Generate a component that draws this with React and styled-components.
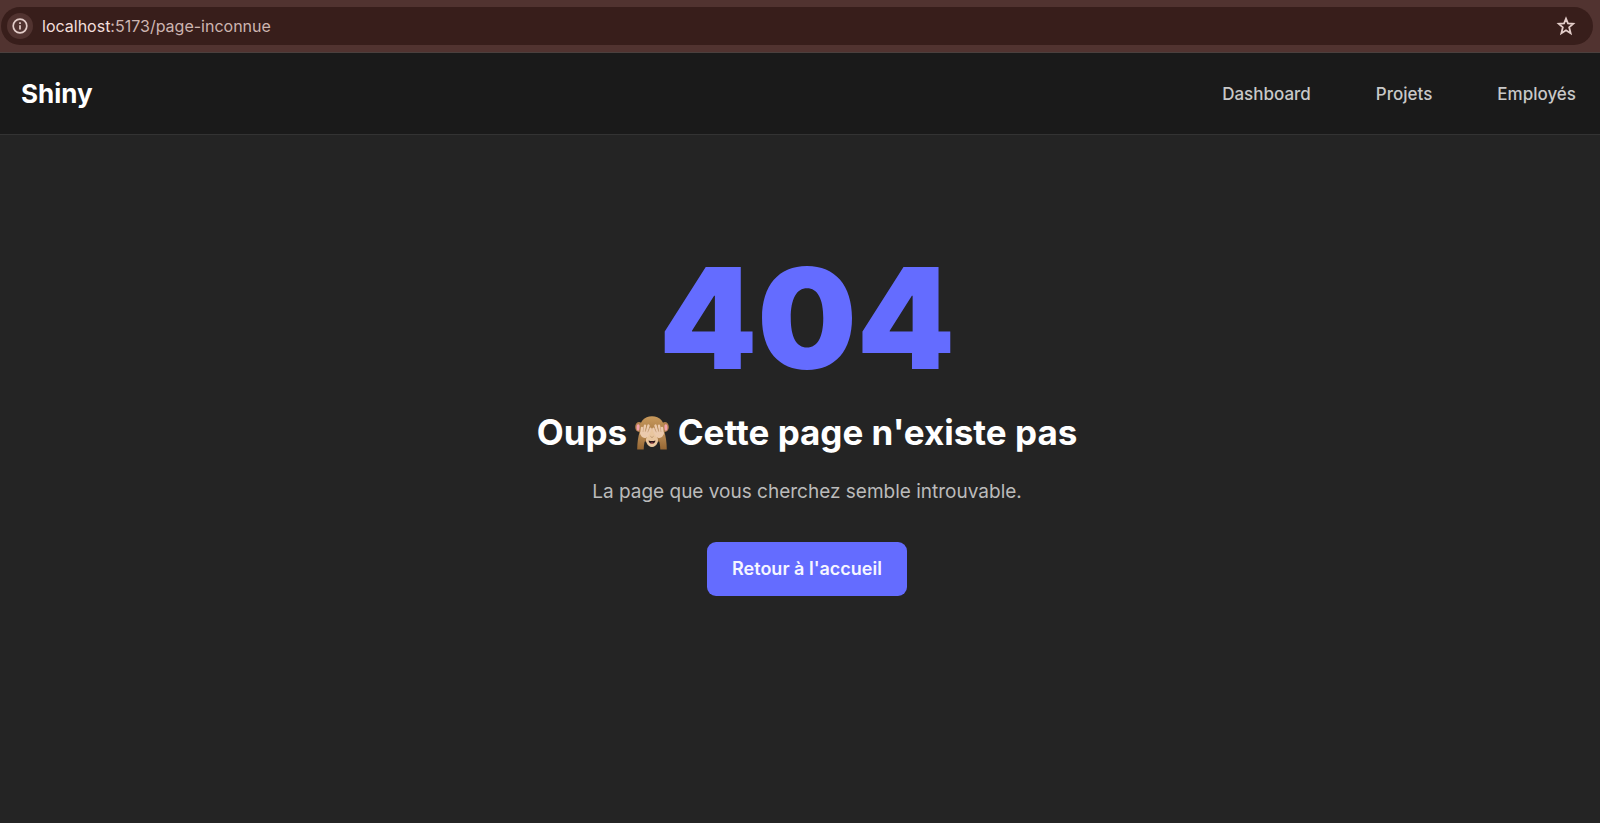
import styled, { createGlobalStyle } from 'styled-components'
import React from 'react'

export default function App() {
  return (
    <>
      <GlobalStyle />
      <Page>
        <AddressBar />
        <Header>
          <Logo href="/">Shiny</Logo>
          <Nav>
            <NavLink href="/dashboard">Dashboard</NavLink>
            <NavLink href="/projets">Projets</NavLink>
            <NavLink href="/employes">Employés</NavLink>
          </Nav>
        </Header>
        <NotFound />
      </Page>
    </>
  )
}

function AddressBar() {
  return (
    <Toolbar>
      <Omnibox>
        <InfoButton type="button" aria-label="Informations sur le site">
          <svg width="16" height="16" viewBox="0 0 16 16" fill="none" stroke="currentColor" strokeWidth="1.7">
            <circle cx="8" cy="8" r="6.8" />
            <path d="M8 7.2v4.3M8 4.2v1.7" />
          </svg>
        </InfoButton>
        <Url>
          <Host>localhost</Host>:5173/page-inconnue
        </Url>
        <StarButton type="button" aria-label="Ajouter aux favoris">
          <svg width="20" height="20" viewBox="0 0 18 18" fill="none" stroke="currentColor" strokeWidth="1.6">
            <path d="M9 2.3l1.750 4.400 4.750.350-3.650 3.050 1.350 5.400L9 12.800l-4.200 2.700 1.350-5.400L2.500 7.050l4.750-.350z" />
          </svg>
        </StarButton>
      </Omnibox>
    </Toolbar>
  )
}

function NotFound() {
  return (
    <Main>
      <Code>404</Code>
      <Title>
        Oups <Monkey /> Cette page n'existe pas
      </Title>
      <Text>La page que vous cherchez semble introuvable.</Text>
      <HomeLink href="/">Retour à l'accueil</HomeLink>
    </Main>
  )
}

function Monkey() {
  return (
    <MonkeySvg viewBox="0 0 34 34" role="img" aria-label="singe">
      <defs>
        <linearGradient id="fur" x1="0" y1="0" x2="0" y2="1">
          <stop offset="0" stopColor="#c99a5c" />
          <stop offset="1" stopColor="#94683a" />
        </linearGradient>
        <linearGradient id="arm" x1="0" y1="0" x2="0" y2="1">
          <stop offset="0" stopColor="#c0935c" />
          <stop offset="1" stopColor="#966632" />
        </linearGradient>
      </defs>
      <ellipse cx="4" cy="11" rx="3.8" ry="5" fill="#b07f4c" />
      <ellipse cx="30" cy="11" rx="3.8" ry="5" fill="#b07f4c" />
      <ellipse cx="3.2" cy="11.5" rx="1.6" ry="3.2" fill="#f3a2ae" />
      <ellipse cx="30.8" cy="11.5" rx="1.6" ry="3.2" fill="#f3a2ae" />
      <path d="M17 .3C9 .3 4.5 6 4.5 13.5c0 7.5 3.5 13.5 12.5 13.5s12.5-6 12.5-13.5C29.5 6 25 .3 17 .3z" fill="url(#fur)" />
      <path d="M17 13c-2 0-3 3-4.700 6-1.500 2.500-1.700 5.500-.8 7.800 1 2.600 3 4.200 5.500 4.200s4.500-1.600 5.500-4.200c.9-2.300.7-5.300-.8-7.800C20 16 19 13 17 13z" fill="#e9c69f" />
      <path d="M15.700 20.500l.8.700M18.300 20.500l-.8.700" stroke="#7d5633" strokeWidth=".8" />
      <path d="M13.600 24.600q3.400 1 6.800 0c0 2-1.400 3.200-3.400 3.200s-3.400-1.200-3.400-3.200z" fill="#2b1519" />
      <path d="M15.200 27q1.800-1.100 3.600 0-1.800 1.200-3.600 0z" fill="#dc6568" />
      <path d="M4.800 15.500C3.200 20 2.300 26 2.200 33.500h6.500c.2-5.500.8-9 3.300-12.500z" fill="url(#arm)" />
      <path d="M29.200 15.500c1.600 4.500 2.500 10.500 2.600 18h-6.500c-.2-5.500-.8-9-3.300-12.500z" fill="url(#arm)" />
      <g id="hand">
        <path
          d="M6.300 17.500L7 12M8.600 17l1.400-7.400M11.200 17l2.300-7.400M13.400 17.500l2.200-4.700"
          fill="none"
          stroke="#ebcaad"
          strokeWidth="2.4"
          strokeLinecap="round"
        />
        <path d="M5.200 16.500c2.500-2 6.500-1.900 9.300 0 0 2.400-1.300 4.300-3.400 5.300-3.300.8-5.700-1.300-5.900-5.300z" fill="#ebcaad" />
        <path d="M8 16l.6-4M10.200 16l1.400-4.700M12.600 16.300l1.700-3.500" fill="none" stroke="#bd946f" strokeWidth=".5" />
      </g>
      <use href="#hand" transform="translate(34 0) scale(-1 1)" />
    </MonkeySvg>
  )
}

const GlobalStyle = createGlobalStyle`
  * {
    box-sizing: border-box;
  }

  body {
    margin: 0;
    background-color: #242424;
    color: #fff;
    font-family: Inter, "Liberation Sans", sans-serif;
  }
`

const Page = styled.div`
  min-height: 100vh;
  display: flex;
  flex-direction: column;
`

const Toolbar = styled.div`
  padding: 7px 7px 7px 1px;
  background-color: #513330;
  border-bottom: 1px solid #4b403e;
`

const Omnibox = styled.div`
  display: flex;
  align-items: center;
  height: 38px;
  padding: 0 16px 0 6px;
  border-radius: 19px;
  background-color: #381e1b;
`

const IconButton = styled.button`
  display: flex;
  align-items: center;
  justify-content: center;
  padding: 0;
  border: none;
  border-radius: 50%;
  background: none;
  color: #e3cdc9;
  cursor: pointer;
`

const InfoButton = styled(IconButton)`
  width: 26px;
  height: 26px;
  background-color: #513330;
`

const StarButton = styled(IconButton)`
  width: 22px;
  height: 22px;
`

const Url = styled.div`
  flex: 1;
  margin-left: 9px;
  font-size: 16px;
  color: #cdb5b1;
`

const Host = styled.span`
  color: #f3dfdc;
`

const Header = styled.header`
  display: flex;
  align-items: center;
  justify-content: space-between;
  height: 82px;
  padding: 0 24px 0 21px;
  background-color: #1a1a1a;
  border-bottom: 1px solid #333;
`

const Logo = styled.a`
  font-size: 26px;
  font-weight: 700;
  color: #fff;
  text-decoration: none;
`

const Nav = styled.nav`
  display: flex;
  gap: 65px;
`

const NavLink = styled.a`
  font-size: 17px;
  font-weight: 500;
  color: #c8c8c8;
  text-decoration: none;
`

const Main = styled.main`
  flex: 1;
  display: flex;
  flex-direction: column;
  align-items: center;
  padding: 113px 0 32px 14px;
  text-align: center;
`

const Code = styled.h1`
  margin: 0;
  font-size: 140px;
  line-height: 140px;
  font-weight: 900;
  color: #646cff;
`

const Title = styled.h2`
  margin: 22px 0 0;
  font-size: 35px;
  line-height: 44px;
  font-weight: 700;
`

const MonkeySvg = styled.svg`
  width: 34px;
  height: 34px;
  vertical-align: -5px;
`

const Text = styled.p`
  margin: 24px 0 0;
  font-size: 19px;
  line-height: 28px;
  color: #bbb;
`

const HomeLink = styled.a`
  margin-top: 36px;
  padding: 15px 25px;
  border-radius: 9px;
  background-color: #646cff;
  font-size: 18px;
  line-height: 24px;
  font-weight: 600;
  color: #f6f6ff;
  text-decoration: none;
`
